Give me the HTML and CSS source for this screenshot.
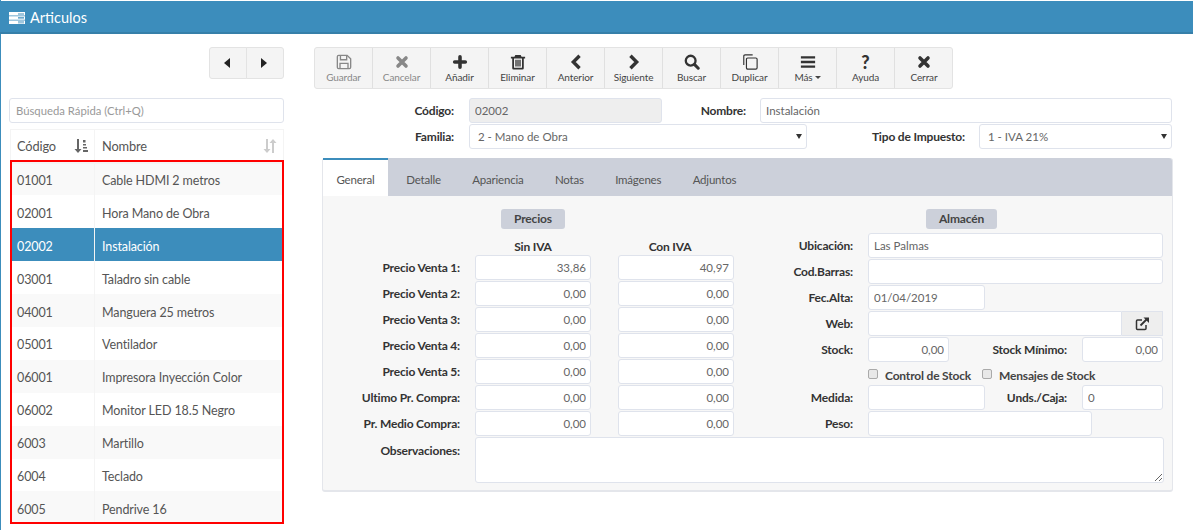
FILE: index.html
```html
<!DOCTYPE html>
<html lang="es">
<head>
<meta charset="utf-8">
<title>Articulos</title>
<link rel="stylesheet" href="styles.css">
</head>
<body>
<div class="page">
  <header class="topbar">
    <svg class="topicon" width="16" height="12" viewBox="0 0 16 12"><path fill="#fff" d="M0 0h16v3.400H0zM0 4.300h16v3.400H0zM0 8.600h16V12H0z"/><path fill="#3c8dbc" d="M9 1h6v.6H9zM9 2.200h6v.5H9zM9 5.300h6v.6H9zM9 6.500h6v.5H9zM9 9.600h6v.6H9zM9 10.800h6v.5H9z"/></svg>
    <span>Articulos</span>
  </header>
  <div class="content">
    <aside class="left">
      <div class="pager">
        <button class="pagebtn"><svg width="8" height="10" viewBox="0 0 8 10"><path fill="#222" d="M6 0v10L0 5z"/></svg></button>
        <button class="pagebtn"><svg width="8" height="10" viewBox="0 0 8 10"><path fill="#222" d="M0 0v10l6-5z"/></svg></button>
      </div>
      <input class="search" type="text" placeholder="Búsqueda Rápida (Ctrl+Q)">
      <div class="tablewrap">
        <table class="grid">
          <thead>
            <tr>
              <th class="c1"><div class="thin"><span>Código</span><svg width="14" height="14" viewBox="0 0 14 14"><path fill="#666" d="M3 0h2v10h2.500L4 14 .5 10H3z"/><path fill="#666" d="M9 1h2.500v2.500H9zM9 5h3v1.500H9zM9 8h4v1.500H9zM9 11h5v2H9z"/></svg></div></th>
              <th><div class="thin"><span>Nombre</span><svg width="14" height="14" viewBox="0 0 14 14"><path fill="#ccc" d="M3 0h2v10h2.500L4 14 .5 10H3z"/><path fill="#ccc" d="M9 14h2V4h2.500L10 0 6.500 4H9z"/></svg></div></th>
            </tr>
          </thead>
          <tbody>
            <tr><td>01001</td><td>Cable HDMI 2 metros</td></tr>
            <tr><td>02001</td><td>Hora Mano de Obra</td></tr>
            <tr class="sel"><td>02002</td><td>Instalación</td></tr>
            <tr><td>03001</td><td>Taladro sin cable</td></tr>
            <tr><td>04001</td><td>Manguera 25 metros</td></tr>
            <tr><td>05001</td><td>Ventilador</td></tr>
            <tr><td>06001</td><td>Impresora Inyección Color</td></tr>
            <tr><td>06002</td><td>Monitor LED 18.5 Negro</td></tr>
            <tr><td>6003</td><td>Martillo</td></tr>
            <tr><td>6004</td><td>Teclado</td></tr>
            <tr><td>6005</td><td>Pendrive 16</td></tr>
          </tbody>
        </table>
        <div class="redbox"></div>
      </div>
    </aside>
    <main class="right">
      <div class="toolbar">
        <button class="tool off"><svg width="16" height="16" viewBox="0 0 18 18"><path fill="none" stroke="#888" stroke-width="1.500" d="M1.500 3q0-1.500 1.500-1.500h9.500l4 4V15q0 1.500-1.500 1.500H3q-1.500 0-1.500-1.500z"/><path fill="none" stroke="#888" stroke-width="1.500" d="M5 1.500v5h7v-5M4.500 16.500v-6h9v6"/></svg><span>Guardar</span></button>
        <button class="tool off"><svg width="16" height="16" viewBox="0 0 18 18"><path stroke="#888" stroke-width="4" stroke-linecap="round" d="M4.500 4.500l9 9M13.500 4.500l-9 9"/></svg><span>Cancelar</span></button>
        <button class="tool"><svg width="16" height="16" viewBox="0 0 18 18"><path stroke="#333" stroke-width="4" stroke-linecap="round" d="M9 3v12M3 9h12"/></svg><span>Añadir</span></button>
        <button class="tool"><svg width="16" height="16" viewBox="0 0 18 18"><path fill="#333" d="M6 1h6l1 2h4v2h-1.500v11q0 1.500-1.500 1.500H4q-1.500 0-1.500-1.500V5H1V3h4zM4.500 5v10.500h9V5zM6 6.500h1.500V14H6zM8.250 6.500h1.500V14h-1.500zM10.500 6.500H12V14h-1.500z"/></svg><span>Eliminar</span></button>
        <button class="tool"><svg width="16" height="16" viewBox="0 0 18 18"><path fill="none" stroke="#333" stroke-width="3.800" d="M13 2L6 9l7 7"/></svg><span>Anterior</span></button>
        <button class="tool"><svg width="16" height="16" viewBox="0 0 18 18"><path fill="none" stroke="#333" stroke-width="3.800" d="M5 2l7 7-7 7"/></svg><span>Siguiente</span></button>
        <button class="tool"><svg width="16" height="16" viewBox="0 0 18 18"><circle cx="7.500" cy="7.500" r="5.500" fill="none" stroke="#333" stroke-width="2.600"/><path stroke="#333" stroke-width="3.400" stroke-linecap="round" d="M12 12l4 4"/></svg><span>Buscar</span></button>
        <button class="tool"><svg width="16" height="16" viewBox="0 0 18 18"><path fill="none" stroke="#333" stroke-width="1.300" d="M2 12.500V2.500Q2 1 3.500 1H12"/><path fill="none" stroke="#333" stroke-width="1.300" d="M6.500 4.500h9q1.500 0 1.500 1.500v9.500q0 1.500-1.500 1.500h-9Q5 17 5 15.500V6q0-1.500 1.500-1.500z"/></svg><span>Duplicar</span></button>
        <button class="tool"><svg width="16" height="16" viewBox="0 0 18 18"><path fill="#333" d="M1 2.500h16v2.600H1zM1 7.700h16v2.600H1zM1 12.900h16v2.600H1z"/></svg><span>Más<i class="caret"></i></span></button>
        <button class="tool"><b class="qmark">?</b><span>Ayuda</span></button>
        <button class="tool"><svg width="16" height="16" viewBox="0 0 18 18"><path stroke="#333" stroke-width="4" stroke-linecap="round" d="M4.500 4.500l9 9M13.500 4.500l-9 9"/></svg><span>Cerrar</span></button>
      </div>
      <div class="headrow first">
        <label class="hl w140">Código:</label>
        <input class="field ro w193" type="text" value="02002" readonly>
        <label class="hl w69">Nombre:</label>
        <input class="field w412" type="text" value="Instalación">
      </div>
      <div class="headrow">
        <label class="hl w140">Familia:</label>
        <div class="selectwrap w338"><select class="field sel-f"><option>2 - Mano de Obra</option></select></div>
        <label class="hl w143">Tipo de Impuesto:</label>
        <div class="selectwrap w193"><select class="field sel-f"><option>1 - IVA 21%</option></select></div>
      </div>
      <section class="panel">
        <nav class="tabs">
          <a class="tab active">General</a>
          <a class="tab">Detalle</a>
          <a class="tab">Apariencia</a>
          <a class="tab">Notas</a>
          <a class="tab">Imágenes</a>
          <a class="tab">Adjuntos</a>
        </nav>
        <div class="panelbody">
          <div class="cols">
            <div class="prices">
              <div class="bandrow"><span class="band b-precios">Precios</span></div>
              <div class="pgrid">
                <span></span><b class="colhead">Sin IVA</b><b class="colhead">Con IVA</b>
                <label>Precio Venta 1:</label><input class="field num" value="33,86"><input class="field num" value="40,97">
                <label>Precio Venta 2:</label><input class="field num" value="0,00"><input class="field num" value="0,00">
                <label>Precio Venta 3:</label><input class="field num" value="0,00"><input class="field num" value="0,00">
                <label>Precio Venta 4:</label><input class="field num" value="0,00"><input class="field num" value="0,00">
                <label>Precio Venta 5:</label><input class="field num" value="0,00"><input class="field num" value="0,00">
                <label>Ultimo Pr. Compra:</label><input class="field num" value="0,00"><input class="field num" value="0,00">
                <label>Pr. Medio Compra:</label><input class="field num" value="0,00"><input class="field num" value="0,00">
              </div>
            </div>
            <div class="store">
              <div class="bandrow"><span class="band b-almacen">Almacén</span></div>
              <div class="sgrid">
                <label>Ubicación:</label><input class="field s-full" value="Las Palmas">
                <label>Cod.Barras:</label><input class="field s-full">
                <label>Fec.Alta:</label><input class="field s-117" value="01/04/2019">
                <label>Web:</label>
                <div class="webgroup"><input class="field webinput"><button class="webbtn"><svg width="14" height="14" viewBox="0 0 14 14"><path fill="none" stroke="#333" stroke-width="1.500" d="M11 8v3.500q0 1-1 1H2.500q-1 0-1-1V4q0-1 1-1H7"/><path fill="none" stroke="#333" stroke-width="1.800" d="M5.500 8.500L12 2"/><path fill="#333" d="M8.500 0.500H14V6z"/></svg></button></div>
                <label>Stock:</label>
                <div class="pair"><input class="field num s-81" value="0,00"><label class="pl">Stock Mínimo:</label><input class="field num s-81" value="0,00"></div>
                <span></span>
                <div class="checks"><span class="chk c-ctrl"><i class="box"></i><b>Control de Stock</b></span><span class="chk"><i class="box"></i><b>Mensajes de Stock</b></span></div>
                <label>Medida:</label>
                <div class="pair"><input class="field s-117"><label class="pl">Unds./Caja:</label><input class="field s-81" value="0"></div>
                <label>Peso:</label><input class="field s-224">
              </div>
            </div>
          </div>
          <div class="obs">
            <label>Observaciones:</label>
            <textarea class="field obsarea"></textarea>
          </div>
        </div>
      </section>
    </main>
  </div>
</div>
</body>
</html>
```
FILE: styles.css
```css
* { box-sizing: border-box; }
html, body { margin: 0; padding: 0; background: #fff; }
body {
  width: 1193px;
  height: 530px;
  overflow: hidden;
  font-family: "Lato", "Noto Sans", sans-serif;
  font-size: 12px;
  color: #555;
}
.page {
  height: 530px;
  padding-top: 1px;
  border-left: 1px solid #3c8dbc;
}
.topbar {
  height: 33px;
  margin-left: -1px;
  background: #3c8dbc;
  border-bottom: 2px solid #367fa9;
  color: #fff;
  font-size: 14.500px;
  display: flex;
  align-items: center;
  gap: 5px;
  padding: 2px 0 0 9px;
}
.content { display: flex; }

/* left column */
.left { width: 275px; margin-left: 8px; flex: none; }
.pager {
  display: flex;
  justify-content: flex-end;
  padding-top: 13px;
  height: 64px;
}
.pagebtn {
  width: 38px;
  height: 32px;
  padding: 0;
  background: #f4f4f4;
  border: 1px solid #e3e3e3;
  display: flex;
  align-items: center;
  justify-content: center;
}
.pagebtn:first-child { border-radius: 3px 0 0 3px; }
.pagebtn + .pagebtn { margin-left: -1px; border-radius: 0 3px 3px 0; }
.search {
  display: block;
  width: 275px;
  height: 25px;
  margin-bottom: 6px;
  padding: 0 6px;
  border: 1px solid #dfe3ec;
  border-radius: 3px;
  font: inherit;
  font-size: 11.300px;
  outline: 0;
}
.search::placeholder { color: #999; }
.tablewrap { position: relative; width: 274px; margin-left: 1px; }
.grid {
  width: 274px;
  border-collapse: collapse;
  table-layout: fixed;
  font-size: 12.500px;
  letter-spacing: -0.120px;
}
.grid th {
  height: 33px;
  padding: 0 6px;
  font-weight: 400;
  text-align: left;
  font-size: 12.800px;
  color: #555;
  border: 1px solid #f4f4f4;
  border-bottom: 2px solid #f4f4f4;
}
.grid th + th { padding-left: 7px; }
.grid .c1 { width: 84px; }
.thin { display: flex; justify-content: space-between; align-items: center; }
.grid td {
  height: 32.900px;
  padding: 3px 6px 0;
  border-left: 1px solid #f4f4f4;
  color: #555;
}
.grid td + td { padding-left: 7px; }
.grid tbody tr:nth-child(odd) td { background: #f9f9f9; }
.grid tbody tr.sel td { background: #3c8dbc; color: #fff; }
.redbox {
  position: absolute;
  left: 0;
  top: 31px;
  width: 274px;
  height: 364px;
  border: 2px solid #f00;
  pointer-events: none;
}

/* right column */
.right { width: 859px; margin-left: 30px; flex: none; }
.toolbar {
  display: flex;
  width: 639px;
  margin-top: 13px;
  height: 42px;
  border: 1px solid #e3e3e3;
  border-radius: 3px;
  background: #f4f4f4;
}
.tool {
  width: 58px;
  flex: none;
  padding: 6px 0 0;
  background: transparent;
  border: 0;
  border-right: 1px solid #e0e0e0;
  font-family: inherit;
  font-size: 10px;
  letter-spacing: -0.100px;
  color: #444;
  display: flex;
  flex-direction: column;
  align-items: center;
  gap: 1px;
}
.tool:last-child { border-right: 0; }
.tool svg { display: block; }
.tool.off { color: #888; }
.qmark {
  height: 16px;
  font-size: 18px;
  line-height: 16px;
  color: #333;
  font-weight: 900;
}
.caret {
  display: inline-block;
  margin-left: 2px;
  vertical-align: 2px;
  border: 3.500px solid transparent;
  border-top-color: #444;
  border-bottom: 0;
}
.headrow {
  display: flex;
  gap: 15px;
  height: 25px;
  margin-top: 1px;
}
.headrow.first { margin-top: 9px; }
.hl {
  flex: none;
  font-weight: 700;
  font-size: 12px;
  letter-spacing: -0.180px;
  color: #333;
  text-align: right;
  line-height: 26px;
  white-space: nowrap;
}
.w140 { width: 140px; }
.w69 { width: 69px; margin-right: -1px; }
.w143 { width: 143px; margin-right: -1px; }
.headrow .w193 { width: 193px; flex: none; }
.headrow .w338 { width: 338px; flex: none; }
.headrow .w412 { width: 412px; flex: none; }
.field {
  display: block;
  width: 100%;
  height: 25px;
  padding: 0 5px;
  border: 1px solid #dfe3ec;
  border-radius: 3px;
  background: #fff;
  font: inherit;
  font-size: 11.500px;
  color: #666;
  outline: 0;
}
.ro { background: #eee; }
.selectwrap { position: relative; }
.sel-f { appearance: none; -webkit-appearance: none; padding-left: 8px; }
.selectwrap::after {
  content: "";
  position: absolute;
  right: 5px;
  top: 10px;
  border: 3px solid transparent;
  border-top: 5px solid #333;
  border-bottom: 0;
}

/* panel */
.panel {
  width: 851px;
  height: 334px;
  margin-top: 9px;
  margin-left: 8px;
  background: #f7f7f7;
  border: 1px solid #e4e6eb;
  border-top: 0;
  border-bottom-width: 2px;
  border-radius: 3px;
}
.tabs {
  display: flex;
  height: 38px;
  background: #ccd0da;
  border-radius: 3px 3px 0 0;
}
.tab {
  height: 38px;
  padding: 0 15.700px;
  font-size: 11.500px;
  letter-spacing: -0.200px;
  color: #555;
  border-top: 2px solid transparent;
  line-height: 39px;
}
.tab.active {
  width: 65px;
  margin-right: 2.500px;
  padding: 0;
  text-align: center;
  background: #fff;
  border-top-color: #3c8dbc;
}
.panelbody { padding-top: 13px; }
.cols { display: flex; }
.prices { width: 412px; flex: none; }
.store { width: 428px; flex: none; }
.bandrow { height: 24px; position: relative; }
.band {
  display: inline-block;
  height: 20px;
  line-height: 19px;
  text-align: center;
  background: #ccd0da;
  border-radius: 3px;
  font-weight: 700;
  color: #444;
  font-size: 12px;
  letter-spacing: -0.180px;
}
.b-precios { width: 64px; margin-left: 178px; }
.b-almacen { width: 71px; margin-left: 191px; }
.pgrid {
  display: grid;
  grid-template-columns: 137px 116px 116px;
  column-gap: 15px;
  row-gap: 1px;
  grid-auto-rows: 25px;
  grid-template-rows: 21px;
}
.pgrid > :nth-child(3n) { margin-left: 12px; }
.pgrid label, .sgrid > label, .pl, .obs label {
  font-weight: 700;
  color: #333;
  text-align: right;
  line-height: 26px;
  font-size: 12px;
  letter-spacing: -0.180px;
  white-space: nowrap;
}
.colhead {
  text-align: center;
  color: #333;
  font-size: 12px;
  letter-spacing: -0.180px;
  line-height: 28px;
}
.num { text-align: right; padding-right: 4px; }
.sgrid {
  display: grid;
  grid-template-columns: 118px 295px;
  grid-template-rows: 25px 25px 25px 25px 25px 21px 25px 25px;
  column-gap: 15px;
  row-gap: 1px;
  align-items: start;
}
.s-full { width: 295px; }
.s-117 { width: 117px; }
.s-81 { width: 81px; }
.s-224 { width: 224px; }
.webgroup { display: flex; width: 295px; }
.webinput { flex: 1; border-radius: 3px 0 0 3px; }
.webbtn {
  width: 41px;
  height: 25px;
  padding: 0;
  border: 1px solid #dfe3ec;
  border-left: 0;
  background: #eee;
  display: flex;
  align-items: center;
  justify-content: center;
}
.pair { display: flex; width: 295px; }
.pair .pl { flex: 1; padding-right: 15px; }
.checks { display: flex; gap: 0; height: 21px; padding-top: 3px; }
.chk {
  display: flex;
  gap: 7px;
  line-height: 19px;
  color: #444;
  font-size: 12px;
  letter-spacing: -0.180px;
}
.c-ctrl { width: 114px; }
.box {
  display: block;
  width: 10px;
  height: 10px;
  margin-top: 3px;
  background: #e8e8e8;
  border: 1px solid #aaa;
  border-radius: 2px;
}
.obs { display: flex; margin-top: 1px; gap: 15px; }
.obs label { width: 137px; flex: none; line-height: 28px; }
.obsarea { width: 689px; height: 46px; resize: both; }
```
